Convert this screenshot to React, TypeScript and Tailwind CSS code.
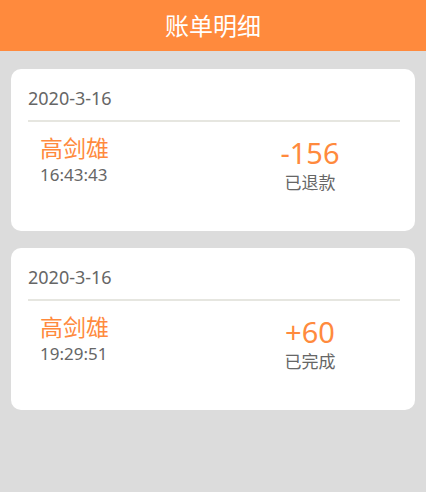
import React from "react";

const font = { fontFamily: '"Noto Sans", "Noto Sans CJK SC", sans-serif' };

type Bill = { date: string; name: string; time: string; amount: string; status: string };

const bills: Bill[] = [
  { date: "2020-3-16", name: "高剑雄", time: "16:43:43", amount: "-156", status: "已退款" },
  { date: "2020-3-16", name: "高剑雄", time: "19:29:51", amount: "+60", status: "已完成" },
];

function Card({ b }: { b: Bill }) {
  return (
    <div className="bg-white rounded-[10px] h-[162px] pl-[17px] pr-[15px] flex flex-col">
      <div className="pt-[17px] pb-[10px] text-[18px] leading-[24px] text-[#666666]">{b.date}</div>
      <div className="h-[2px] bg-[#e6e6e0]" />
      <div className="flex pl-[12px]">
        <div className="flex-1 flex flex-col pt-[13px]">
          <div className="text-[23px] leading-[27px] text-[#ff8a3d]">{b.name}</div>
          <div className="text-[17px] leading-[24px] text-[#666666] mt-[1px]">{b.time}</div>
        </div>
        <div className="flex-1 flex flex-col items-center pt-[13px]">
          <div className="text-[29px] leading-[36px] text-[#ff8a3d]">{b.amount}</div>
          <div className="text-[17px] leading-[24px] text-[#666666]">{b.status}</div>
        </div>
      </div>
    </div>
  );
}

export default function App() {
  return (
    <div style={font} className="w-[426px] h-[492px] bg-[#dcdcdc] flex flex-col">
      <div className="h-[51px] bg-[#ff8a3d] flex items-center justify-center">
        <span className="text-white text-[24px] leading-[30px]">账单明细</span>
      </div>
      <div className="flex flex-col gap-[17px] px-[11px] pt-[18px]">
        {bills.map((b, i) => (
          <Card key={i} b={b} />
        ))}
      </div>
    </div>
  );
}
